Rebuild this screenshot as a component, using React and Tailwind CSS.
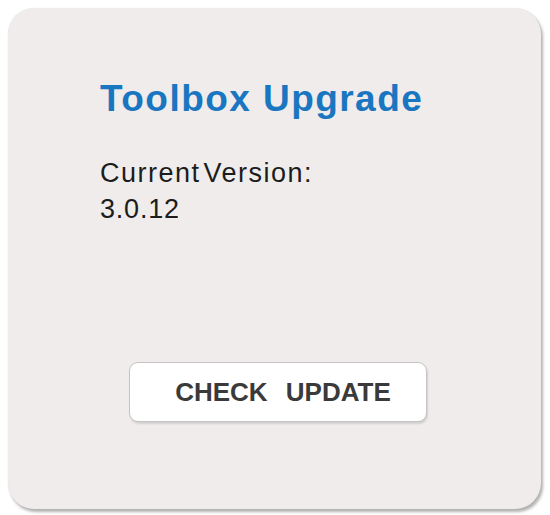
export default function App() {
  return (
    <div className="w-[550px] h-[515px] bg-white pt-[8px] pl-[8px]" style={{ fontFamily: '"Liberation Sans", Arial, sans-serif' }}>
      <div className="w-[533px] h-[501px] rounded-[26px] bg-[#efeceb] shadow-[2px_3px_3px_rgba(0,0,0,0.3),0_0_1px_rgba(0,0,0,0.12)] flex flex-col pt-[69px] pl-[92px]">
        <div className="text-[37px] leading-[44px] font-bold text-[#1a76c1] tracking-[1.45px]">Toolbox Upgrade</div>
        <div className="mt-[34px] text-[27px] leading-[36px] text-[#1c1c1c] tracking-[1.5px] [word-spacing:-6px]">Current Version:</div>
        <div className="text-[27px] leading-[36px] text-[#1c1c1c] tracking-[0.8px]">3.0.12</div>
        <button className="mt-[135px] ml-[29px] w-[298px] h-[60px] rounded-[9px] bg-white border border-[#c4c4c4] shadow-[1px_2px_2px_rgba(0,0,0,0.12)] flex items-center justify-center pl-[10px] text-[26px] font-bold text-[#3a3a3a] [word-spacing:11px]">
          CHECK UPDATE
        </button>
      </div>
    </div>
  );
}
